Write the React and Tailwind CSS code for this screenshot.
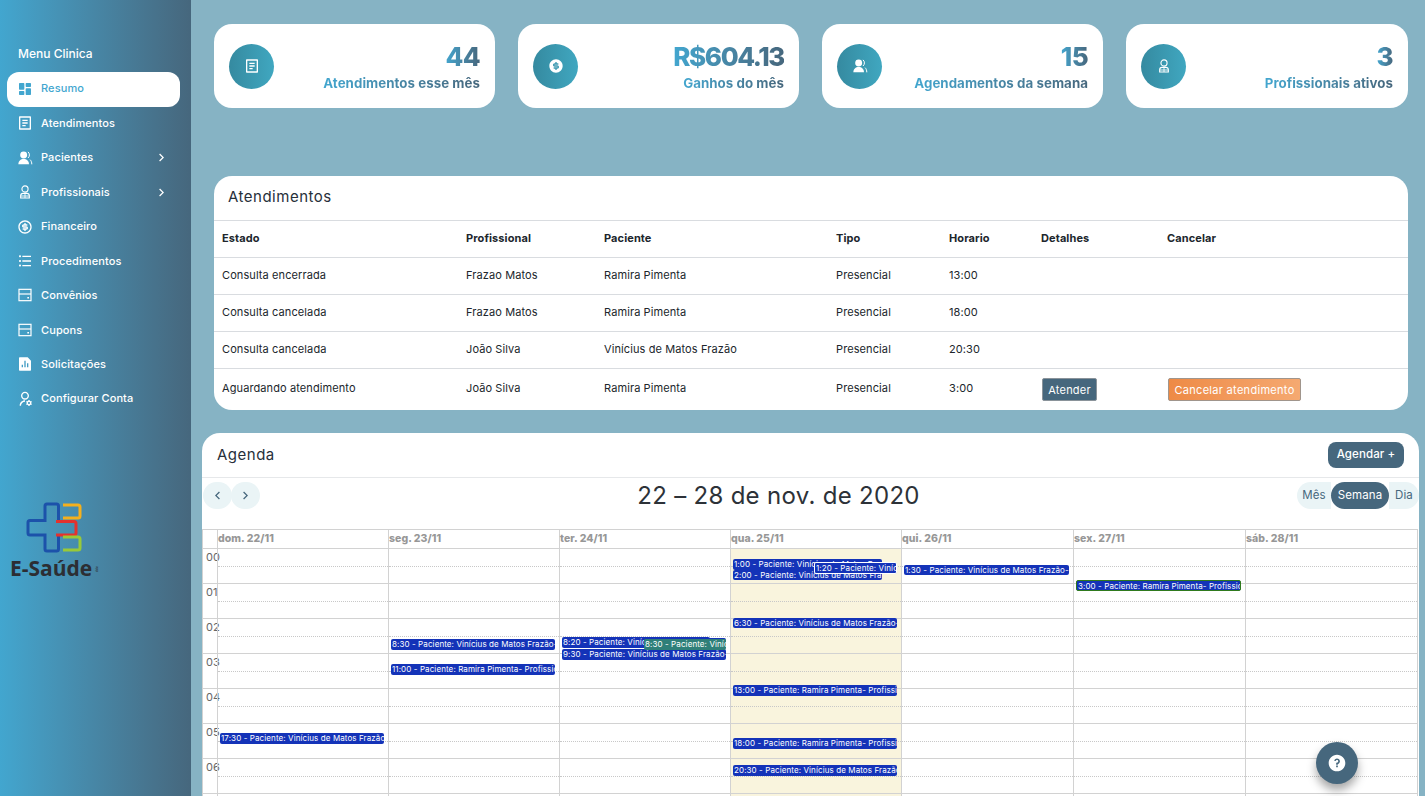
import React from "react";
import { RiDashboardFill, RiFileList2Line, RiMoneyDollarCircleLine, RiListUnordered, RiFileChartFill, RiUserSettingsLine, RiArrowRightSLine, RiArrowLeftSLine, RiQuestionFill, RiMoneyDollarCircleFill } from "react-icons/ri";

function Nurse({ className }) {
  return (
    <svg viewBox="0 0 24 24" className={className} fill="none" stroke="currentColor" strokeWidth="1.7">
      <circle cx="12" cy="7.5" r="4.6" />
      <path d="M5.5 21v-3.5a3.5 3.5 0 0 1 3.5-3.5h6a3.5 3.5 0 0 1 3.5 3.5V21z" />
      <path d="M12 14v7M5.5 18h13" strokeWidth="1.3" />
    </svg>
  );
}

function Patients({ className }) {
  return (
    <svg viewBox="0 0 24 24" className={className} fill="currentColor">
      <circle cx="10" cy="7.5" r="5.2" />
      <path d="M2 21.5c0-5 3.4-8 8-8s8 3 8 8z" />
      <path d="M16.5 2.8a6 6 0 0 1 0 9.2M19.6 14.5c1.7 1.6 2.6 4 2.6 7" fill="none" stroke="currentColor" strokeWidth="1.5" />
    </svg>
  );
}

function CardIcon({ className }) {
  return (
    <svg viewBox="0 0 24 24" className={className} fill="none" stroke="currentColor" strokeWidth="1.8">
      <rect x="3" y="3.5" width="18" height="17" />
      <path d="M3 10.5h18" />
      <path d="M15.5 16h2.5" strokeWidth="2.2" />
    </svg>
  );
}

const menu = [
  { label: "Resumo", icon: RiDashboardFill, active: true },
  { label: "Atendimentos", icon: RiFileList2Line },
  { label: "Pacientes", icon: Patients, arrow: true },
  { label: "Profissionais", icon: Nurse, arrow: true },
  { label: "Financeiro", icon: RiMoneyDollarCircleLine },
  { label: "Procedimentos", icon: RiListUnordered },
  { label: "Convênios", icon: CardIcon },
  { label: "Cupons", icon: CardIcon },
  { label: "Solicitações", icon: RiFileChartFill },
  { label: "Configurar Conta", icon: RiUserSettingsLine },
];

const stats = [
  { value: "44", label: "Atendimentos esse mês", icon: RiFileList2Line },
  { value: "R$604.13", label: "Ganhos do mês", icon: RiMoneyDollarCircleFill, tight: true },
  { value: "15", label: "Agendamentos da semana", icon: Patients },
  { value: "3", label: "Profissionais ativos", icon: Nurse },
];

const rows = [
  ["Consulta encerrada", "Frazao Matos", "Ramira Pimenta", "Presencial", "13:00"],
  ["Consulta cancelada", "Frazao Matos", "Ramira Pimenta", "Presencial", "18:00"],
  ["Consulta cancelada", "João Silva", "Vinícius de Matos Frazão", "Presencial", "20:30"],
  ["Aguardando atendimento", "João Silva", "Ramira Pimenta", "Presencial", "3:00"],
];

const days = ["dom. 22/11", "seg. 23/11", "ter. 24/11", "qua. 25/11", "qui. 26/11", "sex. 27/11", "sáb. 28/11"];
const widths = ["w-[171px]", "w-[171px]", "w-[171px]", "w-[171px]", "w-[172px]", "w-[172px]", "w-[172px]"];

const V = "Paciente: Vinícius de Matos Frazão- Profissional: João Silva";
const R = "Paciente: Ramira Pimenta- Profissional: João Silva";

const events = [[], [], [], [], [], [], []];
events[0] = [{ t: "17:30 - " + V, top: 184, left: 2, w: 164, h: 11 }];
events[1] = [
  { t: "8:30 - " + V, top: 90, left: 2, w: 164, h: 11 },
  { t: "11:00 - " + R, top: 115, left: 2, w: 164, h: 11 },
];
events[2] = [
  { t: "8:20 - " + V, top: 88, left: 2, w: 148, h: 11 },
  { t: "8:30 - " + V, top: 89, left: 84, w: 82, h: 12, green: true },
  { t: "9:30 - " + V, top: 100, left: 2, w: 164, h: 11 },
];
events[3] = [
  { t: "1:00 - " + V, top: 10, left: 2, w: 149, h: 11 },
  { t: "2:00 - " + V, top: 21, left: 2, w: 149, h: 10 },
  { t: "1:20 - " + V, top: 13, left: 83, w: 83, h: 12, ring: true },
  { t: "6:30 - " + V, top: 69, left: 2, w: 164, h: 10 },
  { t: "13:00 - " + R, top: 136, left: 2, w: 164, h: 11 },
  { t: "18:00 - " + R, top: 189, left: 2, w: 164, h: 11 },
  { t: "20:30 - " + V, top: 216, left: 2, w: 164, h: 11 },
];
events[4] = [{ t: "1:30 - " + V, top: 16, left: 2, w: 165, h: 10 }];
events[5] = [{ t: "3:00 - " + R, top: 31, left: 2, w: 165, h: 11, greenBorder: true }];

function Logo() {
  return (
    <div className="flex flex-col items-start pl-[10px] mt-[86px]">
      <svg viewBox="0 0 58 54" className="w-[58px] h-[54px] ml-[15px] -mt-[2px]" fill="none" strokeWidth="3">
        <path d="M33.5 19.5V5a2 2 0 0 0-2-2H22a2 2 0 0 0-2 2v14.5H5a2 2 0 0 0-2 2V32a2 2 0 0 0 2 2h15v14a2 2 0 0 0 2 2h9.5a2 2 0 0 0 2-2V34" stroke="#1c52aa" />
        <path d="M31 20.5h18a2 2 0 0 1 2 2V32a2 2 0 0 1-2 2H31" stroke="#e4322e" />
        <path d="M38 4h15a2 2 0 0 1 2 2v9a2 2 0 0 1-2 2H38" stroke="#f5b01c" />
        <path d="M38 36h15a2 2 0 0 1 2 2v9a2 2 0 0 1-2 2H38" stroke="#99c938" />
      </svg>
      <div className="flex items-center mt-[1px]">
        <span className="font-['Open_Sans',sans-serif] font-bold text-[21px] leading-[24px] text-[#2c2e33]">E-Saúde</span>
        <span className="ml-[1px] mt-[4px] w-[8px] rotate-90 text-[3.5px] leading-[4px] text-[#2c2e33]">app</span>
      </div>
    </div>
  );
}

function Sidebar() {
  return (
    <aside className="w-[191px] shrink-0 h-full bg-gradient-to-r from-[#42a6cf] to-[#46677d] pt-[46px] text-white">
      <div className="pl-[18px] text-[12px] font-medium leading-[15px]">Menu Clinica</div>
      <nav className="mt-[11px] pl-[7px] pr-[11px] flex flex-col">
        {menu.map((m) =>
          <div
            key={m.label}
            className={
              m.active
                ? "h-[35px] pb-[2px] rounded-[12px] bg-white text-[#42a6cf] flex items-center pl-[10px]"
                : "h-[34.45px] pb-[2px] flex items-center pl-[10px] text-white"
            }
          >
            <m.icon className="w-[16px] h-[16px] shrink-0" />
            <span className="ml-[8px] text-[11px] font-medium tracking-[0.1px]">{m.label}</span>
            {m.arrow && <RiArrowRightSLine className="w-[15px] h-[15px] ml-auto mr-[11px]" />}
          </div>
        )}
      </nav>
      <Logo />
    </aside>
  );
}

function Stat({ s, last }) {
  return (
    <div className={(last ? "flex-1" : "w-[281px]") + " h-[84px] rounded-[18px] bg-white flex items-center px-[15px]"}>
      <div className="w-[45px] h-[45px] rounded-full bg-gradient-to-r from-[#358aa0] to-[#40a7c0] flex items-center justify-center text-white">
        <s.icon className="w-[16px] h-[16px]" />
      </div>
      <div className="ml-auto flex flex-col items-end">
        <span className={(s.tight ? "tracking-[-1.4px] " : "tracking-[-0.6px] ") + "text-[26px] font-extrabold leading-[34px] bg-gradient-to-r from-[#42a6cf] to-[#46677d] bg-clip-text text-transparent"}>{s.value}</span>
        <span className="text-[13.3px] font-bold leading-[18px] tracking-[0.05px] bg-gradient-to-r from-[#42a6cf] to-[#46677d] bg-clip-text text-transparent">{s.label}</span>
      </div>
    </div>
  );
}

function Table() {
  const th = "h-[36px] pl-[8px] pb-[2px] text-left font-bold";
  const td = "pl-[8px] font-normal";
  return (
    <section className="mt-[68px] rounded-[18px] bg-white overflow-hidden">
      <h2 className="h-[45px] pb-[2px] border-b border-[#d9dce0] pl-[14px] flex items-center text-[15px] text-[#27303a] tracking-[0.5px]">Atendimentos</h2>
      <table className="w-full table-fixed text-[11px] text-[#20262c] tracking-[0.1px]">
        <colgroup>
          <col className="w-[244px]" />
          <col className="w-[138px]" />
          <col className="w-[232px]" />
          <col className="w-[113px]" />
          <col className="w-[92px]" />
          <col className="w-[126px]" />
          <col />
        </colgroup>
        <thead>
          <tr className="border-b border-[#d9dce0]">
            {["Estado", "Profissional", "Paciente", "Tipo", "Horario", "Detalhes", "Cancelar"].map((h) =>
              <th key={h} className={th}>{h}</th>
            )}
          </tr>
        </thead>
        <tbody>
          {rows.map((r, i) =>
            <tr key={i} className={i < 3 ? "h-[37px] border-b border-[#d9dce0]" : "h-[42px]"}>
              {r.map((c, j) => <td key={j} className={i === 3 ? td + " pb-[2px]" : td}>{c}</td>)}
              <td className={td}>
                {i === 3 && <button className="h-[23px] w-[55px] ml-[1px] mt-[1px] bg-[#46677d] border border-[#8a939a] rounded-[2px] text-white text-[11px] flex items-center justify-center tracking-[0.2px]">Atender</button>}
              </td>
              <td className={td}>
                {i === 3 && <button className="h-[23px] w-[133px] ml-[1px] mt-[1px] bg-gradient-to-r from-[#ee8a45] to-[#f5a971] border border-[#a0958c] rounded-[2px] text-white text-[11px] flex items-center justify-center tracking-[0.3px]">Cancelar atendimento</button>}
              </td>
            </tr>
          )}
        </tbody>
      </table>
    </section>
  );
}

function Event({ e }) {
  return (
    <div
      style={{ top: e.top, left: e.left, width: e.w, height: e.h }}
      className={
        "absolute overflow-hidden whitespace-nowrap rounded-[2px] text-[8px] leading-[10px] pl-[1px] text-white tracking-[0.1px] " +
        (e.green ? "bg-[#2f7f79] border-t border-[#1433b8] " : "bg-[#1433b8] ") +
        (e.ring ? "border border-white " : "") +
        (e.ring || e.green ? "z-20 " : "z-10 ") +
        (e.greenBorder ? "border border-[#2f7a1e] " : "")
      }
    >
      {e.t}
    </div>
  );
}

function Calendar() {
  const hours = ["00", "01", "02", "03", "04", "05", "06", "07"];
  return (
    <div className="mt-[19px] mr-[1px] border border-[#d2d2d2] border-b-0 text-[#777]">
      <div className="flex h-[19px] border-b border-[#d2d2d2]">
        <div className="w-[14px] shrink-0" />
        {days.map((d, i) =>
          <div key={d} className={widths[i] + " shrink-0 border-l border-[#d2d2d2] text-[10.5px] leading-[17px] font-extrabold text-[#979797] tracking-[0.05px]"}>{d}</div>
        )}
      </div>
      <div className="flex">
        <div className="w-[14px] shrink-0">
          {hours.map((h) =>
            <div key={h} className="h-[35px] border-b border-[#d2d2d2] text-[11px] leading-[17px] text-[#666] pl-[3px]">{h}</div>
          )}
        </div>
        {days.map((d, i) =>
          <div key={d} className={widths[i] + " shrink-0 relative border-l border-[#d2d2d2] " + (i === 3 ? "bg-[#f9f4dd]" : "")}>
            {hours.map((h) =>
              <div key={h} className="h-[35px] border-b border-[#d2d2d2]">
                <div className="h-[18px] border-b border-dotted border-[#c8c8c8]" />
              </div>
            )}
            {events[i].map((e, k) => <Event key={k} e={e} />)}
          </div>
        )}
      </div>
    </div>
  );
}

function Agenda() {
  return (
    <section className="mt-[23px] -ml-[12px] -mr-[11px] rounded-t-[18px] bg-white flex-1 min-h-0 overflow-hidden">
      <div className="h-[45px] border-b border-[#e6e8ea] flex items-center pl-[15px] pr-[15px]">
        <h2 className="text-[15px] text-[#27303a] tracking-[0.5px]">Agenda</h2>
        <button className="ml-auto w-[76px] h-[26px] rounded-[8px] bg-[#46677d] text-white text-[11.5px] font-medium tracking-[0.1px]">Agendar +</button>
      </div>
      <div className="relative h-[29px] mt-[3px] flex items-center">
        <div className="flex ml-[1px]">
          <button className="w-[29px] h-[27px] rounded-full bg-[#eaf4f6] text-[#46677d] flex items-center justify-center"><RiArrowLeftSLine className="w-[15px] h-[15px]" /></button>
          <button className="w-[29px] h-[27px] -ml-[1px] rounded-full bg-[#eaf4f6] text-[#46677d] flex items-center justify-center"><RiArrowRightSLine className="w-[15px] h-[15px]" /></button>
        </div>
        <div className="flex-1 text-center text-[24px] leading-[29px] text-[#2d3238] tracking-[0.3px]">22 – 28 de nov. de 2020</div>
        <div className="flex text-[11.5px] tracking-[0.1px]">
          <button className="w-[34px] h-[27px] rounded-l-full bg-[#eaf4f6] text-[#46677d]">Mês</button>
          <button className="w-[58px] h-[27px] rounded-full bg-[#46677d] text-white">Semana</button>
          <button className="w-[30px] h-[27px] rounded-r-full bg-[#eaf4f6] text-[#46677d]">Dia</button>
        </div>
      </div>
      <Calendar />
    </section>
  );
}

export default function App() {
  return (
    <div className="relative flex h-[796px] w-full overflow-hidden bg-[#86b3c4] font-['Inter',sans-serif]">
      <Sidebar />
      <main className="flex-1 min-w-0 flex flex-col pl-[23px] pr-[17px] pt-[24px]">
        <div className="flex gap-[23px]">
          {stats.map((s, i) => <Stat key={s.label} s={s} last={i === 3} />)}
        </div>
        <Table />
        <Agenda />
      </main>
      <button className="absolute left-[1316px] top-[742px] z-30 w-[42px] h-[42px] rounded-full bg-[#46677d] shadow-[0_6px_10px_rgba(0,0,0,0.35)] flex items-center justify-center text-white">
        <RiQuestionFill className="w-[20px] h-[20px]" />
      </button>
    </div>
  );
}
